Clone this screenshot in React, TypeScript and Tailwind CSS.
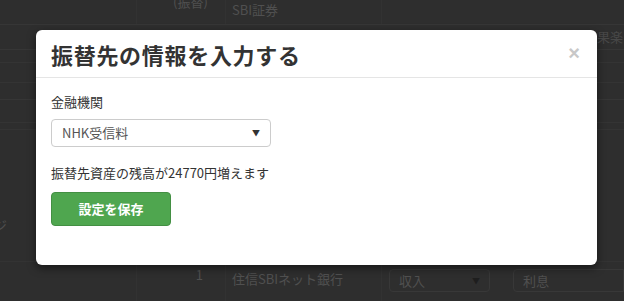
import React from "react";

const font = { fontFamily: '"Noto Sans CJK JP", "Noto Sans", sans-serif' };

export default function App() {
  return (
    <div
      className="relative w-[624px] h-[301px] overflow-hidden bg-[#2e2e2e] text-[#505050]"
      style={font}
    >
      {/* dimmed background table */}
      <div className="flex flex-col">
        <div className="flex h-[25px] border-b border-[#363636]">
          <div className="w-[137px] border-r border-[#323232]" />
          <div className="w-[89px] border-r border-[#323232] relative text-[13px] leading-none">
            <span className="absolute left-[36px] top-[-5px]">(振替)</span>
          </div>
          <div className="w-[156px] border-r border-[#323232] pl-[6px] text-[13px] leading-[14px] pt-[3px]">SBI証券</div>
          <div className="flex-1" />
        </div>
        <div className="flex h-[25px] border-b border-[#363636]">
          <div className="flex-1" />
          <div className="w-[27px] text-[13px] leading-[24px] text-[#484848]">果楽</div>
        </div>
        <div className="h-[13px] border-b border-[#343434]" />
        <div className="h-[20px] border-b border-[#343434]" />
        <div className="h-[17px] border-b border-[#363636]" />
        <div className="h-[23px] border-b border-[#343434]" />
        <div className="h-[7px] border-b border-[#343434]" />
        <div className="flex h-[132px] border-b border-[#333]">
          <div className="w-[137px] relative">
            <span className="absolute left-[-6px] top-[85px] text-[13px]">ジ</span>
          </div>
          <div className="flex-1" />
        </div>
        <div className="flex h-[40px]">
          <div className="w-[137px] border-r border-[#323232]" />
          <div className="w-[89px] border-r border-[#323232] text-right pr-[22px] pt-[6px] text-[13px] leading-none">1</div>
          <div className="w-[156px] border-r border-[#323232] pl-[6px] pt-[8px] text-[13px] leading-[18px]">住信SBIネット銀行</div>
          <div className="flex-1 flex pt-[7px] pl-[7px] gap-[23px]">
            <div className="w-[101px] h-[23px] border border-[#383838] rounded-[4px] flex items-center justify-between px-[9px] text-[13px]">
              <span>収入</span>
              <span className="text-[8px] text-[#1e1e1e]">▼</span>
            </div>
            <div className="flex-1 h-[23px] border border-[#383838] rounded-l-[4px] flex items-center px-[9px] text-[13px]">
              利息
            </div>
          </div>
        </div>
      </div>

      {/* modal */}
      <div className="absolute left-[36px] top-[30px] w-[561px] h-[235px] bg-white rounded-[6px] shadow-[0_3px_9px_rgba(0,0,0,0.5)] flex flex-col">
        <div className="h-[48px] border-b border-[#e5e5e5] flex items-center justify-between pl-[15px] pr-[17px]">
          <h4 className="text-[22px] font-bold text-[#333] leading-none tracking-[0.7px]">振替先の情報を入力する</h4>
          <span className="text-[20px] font-bold text-[#c8c8c8] leading-none pb-[2px]" style={{ fontFamily: '"Liberation Sans", sans-serif' }}>×</span>
        </div>
        <div className="pl-[15px] pt-[15px] flex flex-col text-[13px] text-[#333]">
          <label className="leading-[18px] mb-[8px]">金融機関</label>
          <div className="w-[220px] h-[28px] border border-[#ccc] rounded-[4px] flex items-center justify-between pl-[10px] pr-[10px] text-[#555]">
            <span>NHK受信料</span>
            <span className="text-[8px] text-[#333]">▼</span>
          </div>
          <p className="mt-[16px] leading-[20px] text-[#333]">振替先資産の残高が24770円増えます</p>
          <button className="mt-[9px] w-[120px] h-[34px] bg-[#4fa64f] border border-[#438f43] rounded-[4px] text-white font-bold text-[13px]">
            設定を保存
          </button>
        </div>
      </div>
    </div>
  );
}
